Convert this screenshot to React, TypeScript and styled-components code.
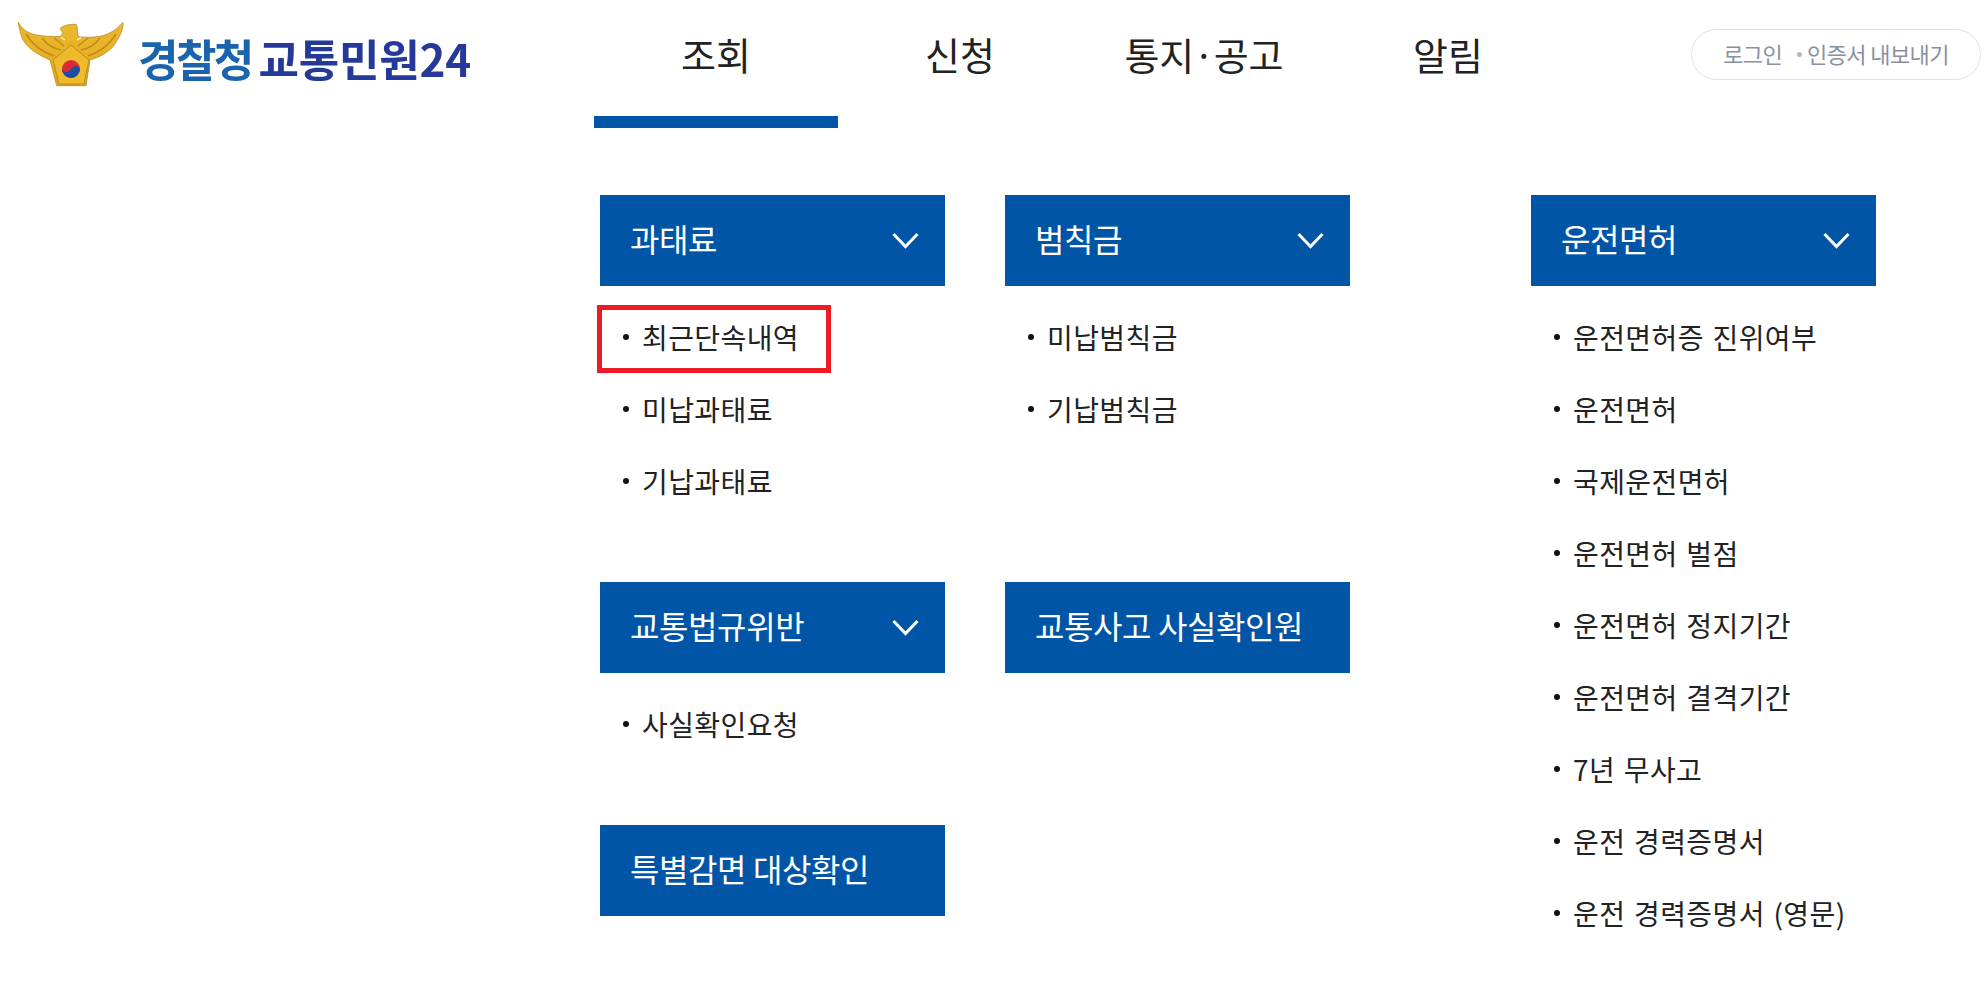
import React from "react";
import styled, { createGlobalStyle } from "styled-components";

const FONT = `"Noto Sans CJK KR", "Noto Sans", sans-serif`;
const BLUE = "#0055a6";

const Global = createGlobalStyle`
  html, body { margin: 0; padding: 0; background: #fff; }
  body { font-family: ${FONT}; color: #222; }
  * { box-sizing: border-box; }
  ul { list-style: none; margin: 0; padding: 0; }
`;

const Page = styled.div`
  width: 1987px;
  height: 999px;
  overflow: hidden;
`;
const Header = styled.header`
  display: flex;
  align-items: flex-start;
  height: 128px;
`;
const Logo = styled.div`
  display: flex;
  align-items: flex-start;
  width: 594px;
  padding: 22px 0 0 18px;
  gap: 14px;
`;
const LogoText = styled.div`
  font-size: 44px;
  font-weight: 700;
  letter-spacing: -0.2px;
  line-height: 60px;
  margin-top: 6px;
  white-space: nowrap;
  color: #25399a;
  filter: blur(0.5px);
`;
const LogoAccent = styled.span`
  color: #1a64ae;
  letter-spacing: -2.6px;
  margin-right: -3px;
`;
const Nav = styled.nav`
  display: flex;
  width: 976px;
`;
const NavItem = styled.a<{ $active?: boolean }>`
  width: 244px;
  height: 128px;
  padding-top: 27px;
  text-align: center;
  font-size: 38px;
  line-height: 54px;
  font-weight: 400;
  color: #222;
  border-bottom: 12px solid ${(p) => (p.$active ? BLUE : "transparent")};
`;
const NavDot = styled.span`
  margin: 0 -1px;
`;
const LoginPill = styled.div`
  display: flex;
  align-items: center;
  justify-content: center;
  gap: 9px;
  margin: 29px 0 0 121px;
  width: 290px;
  height: 51px;
  padding-bottom: 4px;
  border: 1px solid #dde1ec;
  border-radius: 26px;
  font-size: 22px;
  color: #8a90a0;
  white-space: nowrap;
  letter-spacing: -0.6px;
`;
const Dot = styled.span`
  width: 5px;
  height: 5px;
  border-radius: 50%;
  background: #b4b8c6;
  flex: none;
  margin: 4px -4px 0 6px;
`;
const Panel = styled.main`
  display: grid;
  grid-template-columns: 345px 466px 345px;
  grid-template-rows: 387px 243px auto;
  column-gap: 60px;
  margin: 67px 0 0 600px;
`;
const Group = styled.section<{ $tall?: boolean }>`
  max-width: 345px;
  ${(p) => p.$tall && "grid-column: 3; grid-row: 1 / span 3;"}
`;
const GroupHead = styled.div`
  display: flex;
  align-items: center;
  justify-content: space-between;
  height: 91px;
  padding: 0 26px 6px 30px;
  background: ${BLUE};
  color: #fff;
  font-size: 32px;
  letter-spacing: -0.4px;
  white-space: nowrap;
`;
const HeadIcon = styled.svg`
  margin-top: 6px;
`;
const Items = styled.ul`
  padding-top: 15px;
`;
const Item = styled.li`
  position: relative;
  display: flex;
  align-items: center;
  gap: 13px;
  height: 72px;
  padding-left: 23px;
  font-size: 28px;
  color: #222;
  letter-spacing: 0.4px;
  word-spacing: 2px;
  white-space: nowrap;
  &::before {
    content: "";
    width: 6px;
    height: 6px;
    border-radius: 50%;
    background: #111;
    flex: none;
  }
`;
const Highlight = styled.span`
  position: absolute;
  left: -3px;
  top: 4px;
  width: 234px;
  height: 68px;
  border: 5px solid #ed1c24;
`;

const Chevron = () => (
  <HeadIcon width="27" height="17" viewBox="0 0 27 17" fill="none">
    <path d="M1.5 2 L13.5 14.5 L25.5 2" stroke="#fff" strokeWidth="3" />
  </HeadIcon>
);

const EmblemSvg = styled.svg`
  flex: none;
  filter: blur(0.6px);
`;

const Emblem = () => (
  <EmblemSvg width="106" height="66" viewBox="0 0 106 66">
    <defs>
      <linearGradient id="gold" x1="0" y1="0" x2="0" y2="1">
        <stop offset="0" stopColor="#edb92c" />
        <stop offset="1" stopColor="#e2a71e" />
      </linearGradient>
    </defs>
    <path
      d="M0.3 0.3 C5 9 12 12 19 13 C27 15 35 14 42 14.7 L45 11 L42 6.3 C46 3.5 51 2 58 2.3 L59 4.7 L60 14.7 C68 15.5 74 15.5 79 14.7 C87 14 97 10 105 0.3 C105 6 104 9 102 13 C98 21 94 27 88.7 30 C84 34 78 36 72 38 L68 63.7 L38.7 63.7 L32 38 C27 36 22 33 17 30 C11 26 5 20 3.7 14.7 C2 10 1 5 0.3 0.3 Z"
      fill="url(#gold)"
      stroke="#b98a22"
      strokeWidth="0.8"
    />
    <path
      d="M8 12 C14 22 24 30 36 34 M98 12 C92 22 82 30 70 34 M24 16 C28 22 36 27 43 28 M82 16 C78 22 70 27 63 28 M36 16 L46 24 M70 16 L60 24"
      stroke="#a97a1c"
      strokeWidth="1.6"
      fill="none"
      opacity="0.7"
    />
    <path d="M43 15.5 L47 18 M63 15.5 L59 18" stroke="#fff7d8" strokeWidth="1.4" fill="none" />
    <path d="M53 23 L71 38 L66 62 L41 62 L35 38 Z" fill="#efbb2c" stroke="#b98a22" strokeWidth="1" />
    <circle cx="53" cy="47" r="9" fill="#dc2a38" />
    <path d="M44 47 A9 9 0 0 0 62 47 C60 43 56 43 53 47 C50 51 46 51 44 47 Z" fill="#1b4fa0" />
  </EmblemSvg>
);

type G = { title: string; items?: string[]; highlight?: string; tall?: boolean };

const Block = ({ title, items, highlight, tall }: G) => (
  <Group $tall={tall}>
    <GroupHead>
      {title}
      {items && <Chevron />}
    </GroupHead>
    {items && (
      <Items>
        {items.map((t) => (
          <Item key={t}>
            {t}
            {t === highlight && <Highlight />}
          </Item>
        ))}
      </Items>
    )}
  </Group>
);

export default function App() {
  return (
    <Page>
      <Global />
      <Header>
        <Logo>
          <Emblem />
          <LogoText>
            <LogoAccent>경찰청</LogoAccent> 교통민원24
          </LogoText>
        </Logo>
        <Nav>
          <NavItem $active>조회</NavItem>
          <NavItem>신청</NavItem>
          <NavItem>
            통지<NavDot>·</NavDot>공고
          </NavItem>
          <NavItem>알림</NavItem>
        </Nav>
        <LoginPill>
          로그인
          <Dot />
          인증서 내보내기
        </LoginPill>
      </Header>
      <Panel>
        <Block title="과태료" items={["최근단속내역", "미납과태료", "기납과태료"]} highlight="최근단속내역" />
        <Block title="범칙금" items={["미납범칙금", "기납범칙금"]} />
        <Block
          tall
          title="운전면허"
          items={[
            "운전면허증 진위여부",
            "운전면허",
            "국제운전면허",
            "운전면허 벌점",
            "운전면허 정지기간",
            "운전면허 결격기간",
            "7년 무사고",
            "운전 경력증명서",
            "운전 경력증명서 (영문)",
          ]}
        />
        <Block title="교통법규위반" items={["사실확인요청"]} />
        <Block title="교통사고 사실확인원" />
        <Block title="특별감면 대상확인" />
      </Panel>
    </Page>
  );
}
